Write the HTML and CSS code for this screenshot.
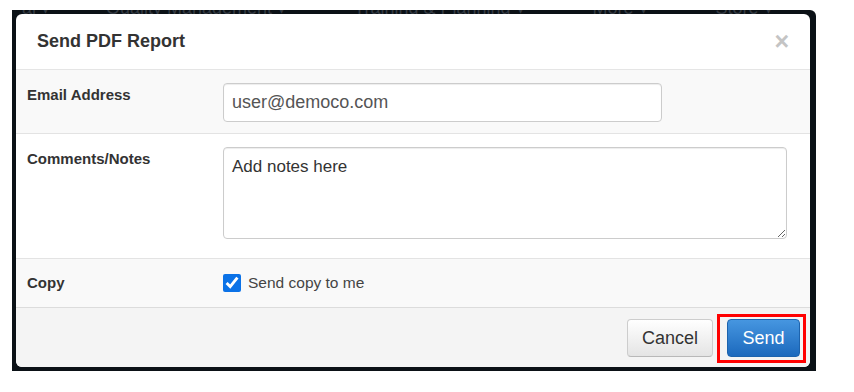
FILE: index.html
```html
<!DOCTYPE html>
<html lang="en">
<head>
    <meta charset="UTF-8">
    <meta name="viewport" content="width=device-width, initial-scale=1.0">
    <title>Send PDF Report</title>
    <link rel="stylesheet" href="styles.css">
</head>
<body>
    <div class="backdrop">
        <nav class="top-nav">
            <span class="nav-item nav-first">al ▾</span>
            <span class="nav-item">Quality Management ▾</span>
            <span class="nav-item">Training &amp; Planning ▾</span>
            <span class="nav-item">More ▾</span>
            <span class="nav-item">Store ▾</span>
        </nav>

        <div class="modal">
            <div class="modal-header">
                <h3>Send PDF Report</h3>
                <button class="close" type="button">&times;</button>
            </div>

            <div class="form-row row-alt">
                <label class="row-label" for="email">Email Address</label>
                <div class="row-field">
                    <input id="email" class="text-input" type="text" value="user@democo.com">
                </div>
            </div>

            <div class="form-row row-notes">
                <label class="row-label" for="notes">Comments/Notes</label>
                <div class="row-field">
                    <textarea id="notes" class="notes-input">Add notes here</textarea>
                </div>
            </div>

            <div class="form-row row-alt row-copy">
                <span class="row-label">Copy</span>
                <label class="check">
                    <input type="checkbox" checked>
                    <span>Send copy to me</span>
                </label>
            </div>

            <div class="modal-footer">
                <button class="btn btn-cancel" type="button">Cancel</button>
                <span class="highlight">
                    <button class="btn btn-send" type="button">Send</button>
                </span>
            </div>
        </div>
    </div>
</body>
</html>
```

FILE: styles.css
```css
* {
    margin: 0;
    padding: 0;
    box-sizing: border-box;
}

body {
    font-family: 'Liberation Sans', Arial, sans-serif;
    background: #fff;
    color: #333;
}

.backdrop {
    width: 804px;
    height: 361px;
    margin: 10px 0 0 12px;
    background: #0b1116;
    border-top-right-radius: 6px;
    padding: 0 6px 4px 4px;
}

/* page menu behind the overlay, only its lower edge shows */
.top-nav {
    height: 4px;
    overflow: hidden;
    display: flex;
    align-items: flex-end;
    color: #343a42;
    font-size: 18px;
    line-height: 12px;
    white-space: nowrap;
}

.nav-item {
    margin-left: 68px;
}

.nav-first {
    margin-left: 6px;
    margin-right: -12px;
}

.modal {
    width: 794px;
    height: 353px;
    background: #fff;
    border-radius: 6px;
    overflow: hidden;
    display: flex;
    flex-direction: column;
}

.modal-header {
    height: 56px;
    display: flex;
    align-items: center;
    justify-content: space-between;
    padding: 0 21px 0 21px;
    border-bottom: 1px solid #e5e5e5;
}

.modal-header h3 {
    font-size: 18px;
    font-weight: bold;
    color: #333;
}

.close {
    background: none;
    border: none;
    font-family: 'Liberation Sans', Arial, sans-serif;
    font-size: 25px;
    font-weight: bold;
    color: #c4c4c4;
    line-height: 1;
    cursor: pointer;
}

.form-row {
    display: grid;
    grid-template-columns: 196px 1fr;
    padding: 13px 0 11px 11px;
    border-bottom: 1px solid #e3e3e3;
}

.row-alt {
    background: #f9f9f9;
}

.row-label {
    font-size: 15px;
    font-weight: bold;
    line-height: 18px;
    margin-top: 3px;
    color: #333;
}

.text-input {
    width: 439px;
    height: 39px;
    border: 1px solid #ccc;
    border-radius: 4px;
    padding: 0 8px;
    font-family: 'Liberation Sans', Arial, sans-serif;
    font-size: 18px;
    color: #555;
    background: #fff;
    box-shadow: inset 0 1px 1px rgba(0, 0, 0, 0.075);
}

.row-notes {
    padding-bottom: 19px;
}

.notes-input {
    display: block;
    width: 564px;
    height: 92px;
    border: 1px solid #ccc;
    border-radius: 4px;
    padding: 9px 8px;
    font-family: 'Liberation Sans', Arial, sans-serif;
    font-size: 17px;
    line-height: 20px;
    color: #333;
    box-shadow: inset 0 1px 1px rgba(0, 0, 0, 0.075);
}

.row-copy {
    height: 49px;
    padding: 0 0 0 11px;
    align-items: center;
    border-bottom: 1px solid #dcdcdc;
}

.row-copy .row-label {
    margin-top: 0;
}

.check {
    display: flex;
    align-items: center;
    gap: 7px;
    font-size: 15.5px;
    color: #444;
}

.check input {
    width: 18px;
    height: 18px;
    margin: 0;
    accent-color: #0b72e7;
}

.modal-footer {
    flex: 1;
    background: #f4f4f4;
    display: flex;
    justify-content: flex-end;
    align-items: flex-start;
    padding: 6px 4px 4px;
}

.btn {
    height: 38px;
    border-radius: 4px;
    font-family: 'Liberation Sans', Arial, sans-serif;
    font-size: 18px;
    cursor: pointer;
}

.btn-cancel {
    width: 86px;
    margin: 5px 4px 0 0;
    color: #333;
    background: linear-gradient(#ffffff, #e4e4e4);
    border: 1px solid #cdcdcd;
    border-bottom-color: #b8b8b8;
}

.highlight {
    display: block;
    border: 3px solid #ff0000;
    padding: 2px 3px 3px 7px;
}

.btn-send {
    display: block;
    width: 73px;
    color: #fff;
    background: linear-gradient(#4696e0, #1c69bd);
    border: 1px solid #1d63ad;
}
```
